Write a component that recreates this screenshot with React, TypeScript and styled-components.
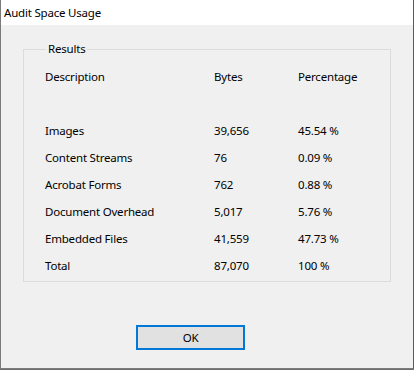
import React from "react";
import styled, { createGlobalStyle } from "styled-components";

const Global = createGlobalStyle`
  html, body { margin: 0; padding: 0; background: #6e6e6e; }
  body {
    font-family: "Noto Sans", "Open Sans", sans-serif;
    font-size: 11.5px;
    letter-spacing: -0.2px;
    color: #000;
  }
`;

const Window = styled.div`
  width: 412px;
  height: 368px;
  border-left: 1px solid #7a7a7a;
  border-right: 1px solid #5a5a5a;
  border-bottom: 1px solid #7a7a7a;
  background: #f0f0f0;
  display: flex;
  flex-direction: column;
`;

const TitleBar = styled.div`
  height: 25px;
  background: #ffffff;
  display: flex;
  align-items: center;
  padding-left: 3px;
  line-height: 16px;
`;

const Body = styled.div`
  flex: 1;
  display: flex;
  flex-direction: column;
  padding: 16px 22px 0 22px;
`;

const GroupBox = styled.fieldset`
  margin: 0;
  padding: 6px 0 2px 21px;
  border: 1px solid #dcdcdc;
  min-width: 0;
`;

const Legend = styled.legend`
  padding: 0 2px;
  margin-left: 1px;
  line-height: 16px;
`;

const Table = styled.div`
  display: grid;
  grid-template-columns: 169px 84px 1fr;
  grid-auto-rows: 27px;
  align-items: center;
`;

const Cell = styled.div`
  line-height: 16px;
  white-space: nowrap;
`;

const Spacer = styled.div`
  grid-column: 1 / -1;
`;

const Footer = styled.div`
  display: flex;
  padding-top: 43px;
  padding-left: 113px;
`;

const Button = styled.button`
  width: 109px;
  height: 25px;
  box-sizing: border-box;
  border: 2px solid #0078d7;
  background: #e1e1e1;
  font-family: inherit;
  font-size: inherit;
  letter-spacing: inherit;
  color: #000;
  padding: 0;
  margin: 0;
`;

const rows: [string, string, string][] = [
  ["Images", "39,656", "45.54 %"],
  ["Content Streams", "76", "0.09 %"],
  ["Acrobat Forms", "762", "0.88 %"],
  ["Document Overhead", "5,017", "5.76 %"],
  ["Embedded Files", "41,559", "47.73 %"],
  ["Total", "87,070", "100 %"],
];

export default function App() {
  return (
    <>
      <Global />
      <Window>
        <TitleBar>Audit Space Usage</TitleBar>
        <Body>
          <GroupBox>
            <Legend>Results</Legend>
            <Table>
              <Cell>Description</Cell>
              <Cell>Bytes</Cell>
              <Cell>Percentage</Cell>
              <Spacer />
              {rows.map(([d, b, p]) => (
                <React.Fragment key={d}>
                  <Cell>{d}</Cell>
                  <Cell>{b}</Cell>
                  <Cell>{p}</Cell>
                </React.Fragment>
              ))}
            </Table>
          </GroupBox>
          <Footer>
            <Button>OK</Button>
          </Footer>
        </Body>
      </Window>
    </>
  );
}
